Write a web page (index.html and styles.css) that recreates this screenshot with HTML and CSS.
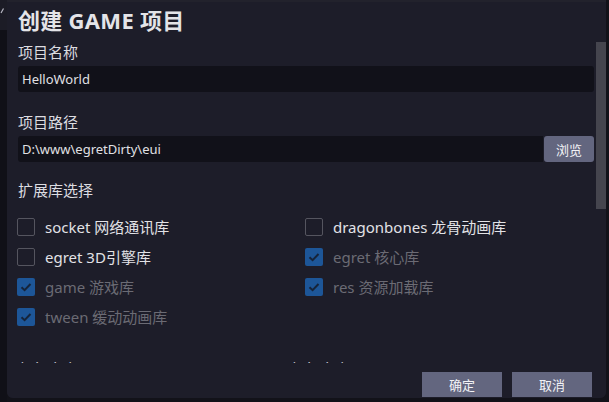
FILE: index.html
```html
<!DOCTYPE html>
<html lang="zh-CN">
<head>
<meta charset="utf-8">
<title>创建 GAME 项目</title>
<link rel="stylesheet" href="styles.css">
</head>
<body>
<div class="edge-left">
  <div class="edge-top">
    <svg class="edge-mark" width="6" height="8" viewBox="0 0 6 8"><path d="M4.5 1.5 L2 6" stroke="#b8b8c4" stroke-width="1.2" fill="none"/></svg>
  </div>
</div>
<div class="dialog">
  <div class="body">
    <div class="content">
      <h1 class="title">创建 GAME 项目</h1>
      <div class="label">项目名称</div>
      <div class="input">HelloWorld</div>
      <div class="label label-gap">项目路径</div>
      <div class="path-row">
        <div class="input input-grow">D:\www\egretDirty\eui</div>
        <button class="btn btn-browse">浏览</button>
      </div>
      <div class="label label-gap2">扩展库选择</div>
      <div class="checks">
        <div class="check"><span class="box"></span><span class="ctext">socket 网络通讯库</span></div>
        <div class="check"><span class="box"></span><span class="ctext">dragonbones 龙骨动画库</span></div>
        <div class="check"><span class="box"></span><span class="ctext">egret 3D引擎库</span></div>
        <div class="check disabled"><span class="box on"><svg width="18" height="18" viewBox="0 0 18 18"><path d="M4.5 9.2 L7.6 12.2 L13.5 6" stroke="#16243a" stroke-width="2" fill="none"/></svg></span><span class="ctext">egret 核心库</span></div>
        <div class="check disabled"><span class="box on"><svg width="18" height="18" viewBox="0 0 18 18"><path d="M4.5 9.2 L7.6 12.2 L13.5 6" stroke="#16243a" stroke-width="2" fill="none"/></svg></span><span class="ctext">game 游戏库</span></div>
        <div class="check disabled"><span class="box on"><svg width="18" height="18" viewBox="0 0 18 18"><path d="M4.5 9.2 L7.6 12.2 L13.5 6" stroke="#16243a" stroke-width="2" fill="none"/></svg></span><span class="ctext">res 资源加载库</span></div>
        <div class="check disabled"><span class="box on"><svg width="18" height="18" viewBox="0 0 18 18"><path d="M4.5 9.2 L7.6 12.2 L13.5 6" stroke="#16243a" stroke-width="2" fill="none"/></svg></span><span class="ctext">tween 缓动动画库</span></div>
      </div>
      <div class="more">
        <div class="label">每行文字</div>
        <div class="label">每行文字</div>
      </div>
    </div>
    <div class="scrollbar"><div class="thumb"></div></div>
  </div>
  <div class="footer">
    <button class="btn btn-foot">确定</button>
    <button class="btn btn-foot">取消</button>
  </div>
</div>
<div class="edge-right"></div>
</body>
</html>
```

FILE: styles.css
```css
html, body {
  margin: 0;
  padding: 0;
  height: 100%;
}
body {
  background: #121219;
  display: flex;
  overflow: hidden;
  font-family: "Noto Sans", "Noto Sans CJK SC", sans-serif;
  color: #dedee2;
}
.edge-left {
  width: 7px;
  flex: none;
  background: #101017;
}
.edge-top {
  height: 30px;
  background: #1c1c26;
  position: relative;
}
.edge-mark {
  position: absolute;
  left: -1px;
  top: 7px;
}
.edge-right {
  width: 3px;
  flex: none;
  background: #121219;
}
.dialog {
  width: 599px;
  height: 398px;
  flex: none;
  background: #1d1d29;
  border-radius: 0 0 6px 6px;
  border-top: 2px solid #22222c;
  box-sizing: border-box;
  display: flex;
  flex-direction: column;
  overflow: hidden;
}
.body {
  flex: 1;
  display: flex;
  overflow: hidden;
  min-height: 0;
}
.content {
  flex: 1;
  padding: 3px 2px 0 11px;
  overflow: hidden;
}
.scrollbar {
  width: 10px;
  flex: none;
  padding-top: 40px;
}
.thumb {
  height: 167px;
  background: #45454e;
}
.title {
  margin: 0;
  font-size: 22px;
  font-weight: 700;
  line-height: 30px;
  color: #e4e4e8;
  letter-spacing: 0.3px;
}
.label {
  font-size: 15px;
  line-height: 20px;
  margin-top: 7px;
  color: #dcdce0;
}
.label-gap {
  margin-top: 20px;
}
.label-gap2 {
  margin-top: 18px;
}
.input {
  margin-top: 4px;
  height: 26px;
  box-sizing: border-box;
  background: #111119;
  border-radius: 3px;
  padding: 0 4px;
  font-size: 13px;
  line-height: 26px;
  color: #e0e0e4;
}
.path-row {
  display: flex;
  align-items: stretch;
  margin-top: 4px;
}
.input-grow {
  flex: 1;
  margin-top: 0;
  border-radius: 3px 0 0 3px;
}
.btn {
  border: none;
  background: #63667f;
  color: #f2f2f6;
  font-family: "Noto Sans CJK SC", sans-serif;
  font-size: 13px;
  padding: 0;
  margin: 0;
  cursor: pointer;
}
.btn-browse {
  width: 50px;
  height: 26px;
  margin-left: 1px;
  border-radius: 3px;
}
.checks {
  margin-top: 13px;
  display: grid;
  grid-template-columns: 288px 1fr;
  grid-auto-rows: 30px;
}
.check {
  display: flex;
  align-items: center;
  gap: 10px;
}
.box {
  width: 18px;
  height: 18px;
  box-sizing: border-box;
  border: 1px solid #55555f;
  border-radius: 2px;
  flex: none;
  margin-left: -1px;
  margin-top: -2px;
}
.box.on {
  border: none;
  background: #1d5698;
}
.box svg {
  display: block;
}
.ctext {
  font-size: 15px;
  line-height: 20px;
  color: #e2e2e6;
  margin-top: -2px;
}
.disabled .ctext {
  color: #6b6b74;
}
.more {
  display: grid;
  grid-template-columns: 272px 1fr;
  margin-top: 26px;
}
.more .label {
  margin-top: 0;
}
.footer {
  flex: none;
  height: 35px;
  display: flex;
  justify-content: flex-end;
  align-items: flex-start;
  gap: 10px;
  padding: 9px 14px 0 0;
  box-sizing: border-box;
  background: #1d1d29;
}
.btn-foot {
  width: 80px;
  height: 25px;
}
```
